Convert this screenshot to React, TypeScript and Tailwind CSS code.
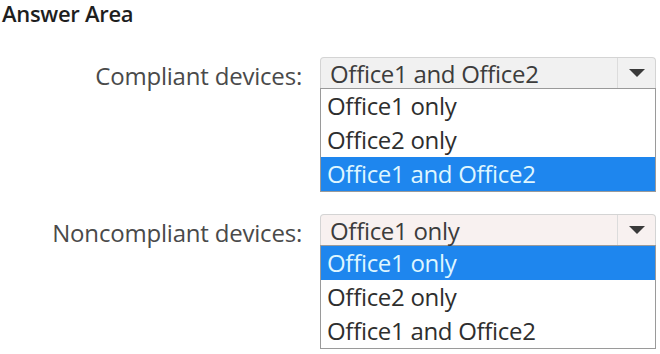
type DropdownProps = {
  value: string;
  options: string[];
  selected: number;
  tint?: string;
};

function Arrow() {
  return (
    <svg width="16" height="8" viewBox="0 0 16 8">
      <path d="M0 0 L16 0 L8 8 Z" fill="#3a3a3a" />
    </svg>
  );
}

function Dropdown({ value, options, selected, tint }: DropdownProps) {
  return (
    <div className="w-[336px]">
      <div
        className={
          'flex h-[31px] rounded-t-[4px] border border-b-0 border-[#d4d4d4] ' +
          (tint === 'pink' ? 'bg-[#f8f1f0]' : 'bg-[#f1f1f1]')
        }
      >
        <div className="flex-1 pl-[9px] leading-[31px] text-[24px] tracking-[-0.3px] text-[#3c3c3c]">
          {value}
        </div>
        <div className="flex w-[38px] items-center justify-center border-l border-[#dcdcdc]">
          <Arrow />
        </div>
      </div>
      <div className="border border-[#9a9a9a] bg-white">
        {options.map((o, i) => (
          <div
            key={o}
            className={
              'h-[34px] pl-[6px] leading-[33px] text-[24px] tracking-[-0.3px] ' +
              (i === selected ? 'bg-[#1e86ee] text-[#dff6ff]' : 'text-[#2e2e2e]')
            }
          >
            {o}
          </div>
        ))}
      </div>
    </div>
  );
}

const OPTIONS = ['Office1 only', 'Office2 only', 'Office1 and Office2'];

export default function App() {
  return (
    <div className="h-[354px] w-[660px] overflow-hidden bg-white font-['Open_Sans',sans-serif]">
      <div className="pl-[2px] text-[22px] font-semibold leading-[27px] tracking-[-0.3px] text-[#1e1e1e]">
        Answer Area
      </div>

      <div className="mt-[30px] flex items-start">
        <div className="h-[31px] w-[302px] pt-[3px] text-right text-[24px] leading-[31px] tracking-[-0.2px] text-[#4a4a4a]">
          Compliant devices:
        </div>
        <div className="ml-[18px]">
          <Dropdown value="Office1 and Office2" options={OPTIONS} selected={2} />
        </div>
      </div>

      <div className="mt-[22px] flex items-start">
        <div className="h-[31px] w-[302px] pt-[3px] text-right text-[24px] leading-[31px] tracking-[-0.2px] text-[#4a4a4a]">
          Noncompliant devices:
        </div>
        <div className="ml-[18px]">
          <Dropdown value="Office1 only" options={OPTIONS} selected={0} tint="pink" />
        </div>
      </div>
    </div>
  );
}
